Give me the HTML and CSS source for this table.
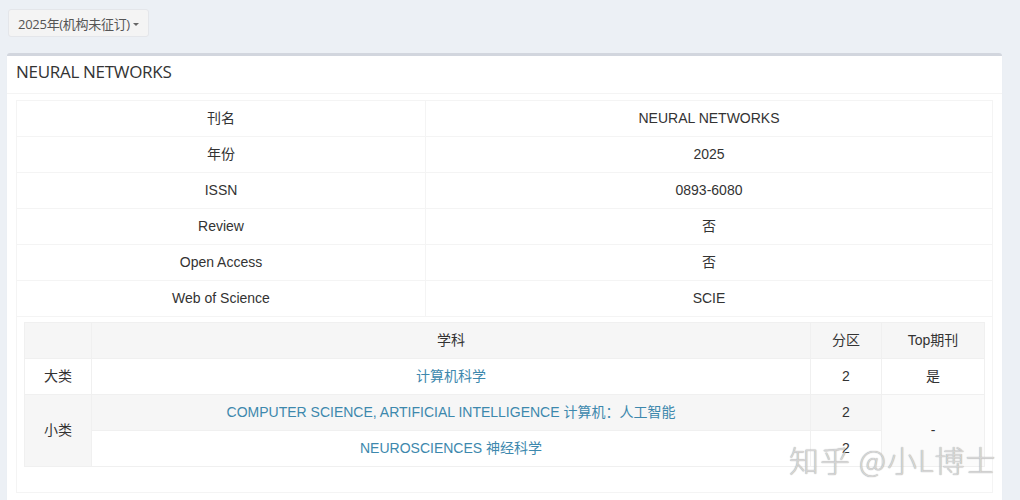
FILE: index.html
```html
<!DOCTYPE html>
<html lang="zh">
<head>
<meta charset="utf-8">
<title>NEURAL NETWORKS</title>
<link rel="stylesheet" href="styles.css">
</head>
<body>
<div class="page">
  <div class="toolbar">
    <button class="year-btn">2025年(机构未征订) <span class="caret"></span></button>
  </div>
  <div class="box">
    <div class="box-header"><h3>NEURAL NETWORKS</h3></div>
    <div class="box-body">
      <table class="info">
        <colgroup><col class="c-label"><col></colgroup>
        <tr><td>刊名</td><td>NEURAL NETWORKS</td></tr>
        <tr><td>年份</td><td>2025</td></tr>
        <tr><td>ISSN</td><td>0893-6080</td></tr>
        <tr><td>Review</td><td>否</td></tr>
        <tr><td>Open Access</td><td>否</td></tr>
        <tr><td>Web of Science</td><td>SCIE</td></tr>
        <tr><td colspan="2" class="nest">
          <table class="subjects">
            <colgroup><col class="s1"><col class="s2"><col class="s3"><col class="s4"></colgroup>
            <tr class="odd"><td></td><td>学科</td><td>分区</td><td>Top期刊</td></tr>
            <tr><td>大类</td><td><a href="#">计算机科学</a></td><td>2</td><td>是</td></tr>
            <tr class="odd"><td rowspan="2">小类</td><td><a href="#">COMPUTER SCIENCE, ARTIFICIAL INTELLIGENCE 计算机：人工智能</a></td><td>2</td><td rowspan="2" class="plain">-</td></tr>
            <tr><td><a href="#">NEUROSCIENCES 神经科学</a></td><td>2</td></tr>
          </table>
        </td></tr>
      </table>
    </div>
  </div>
</div>
<div class="watermark">知乎 @小L博士</div>
</body>
</html>
```

FILE: styles.css
```css
html, body {
  margin: 0;
  padding: 0;
  background: #ecf0f5;
  height: 100%;
  overflow: hidden;
}
body {
  font-family: "Liberation Sans", Arial, "Noto Sans CJK SC", sans-serif;
  color: #333;
  font-size: 14px;
}
.page {
  padding: 9px 18px 0 7px;
}
.toolbar {
  padding-left: 1px;
  height: 44px;
}
.year-btn {
  font-family: "Open Sans", "Noto Sans CJK SC", sans-serif;
  font-size: 13px;
  color: #555;
  background: #f4f4f4;
  border: 1px solid #e4e6ea;
  border-radius: 3px;
  height: 28px;
  width: 141px;
  padding: 0 4px;
  display: flex;
  align-items: center;
  justify-content: center;
  gap: 3px;
  letter-spacing: -0.3px;
}
.caret {
  display: inline-block;
  width: 0;
  height: 0;
  border-left: 3px solid transparent;
  border-right: 3px solid transparent;
  border-top: 3px solid #666;
  margin-top: 2px;
}
.box {
  background: #fff;
  border-top: 3px solid #d2d6de;
  border-radius: 3px;
  box-shadow: 0 1px 1px rgba(0,0,0,0.06);
  height: 460px;
}
.box-header {
  padding: 0 9px 7px 9px;
  height: 30px;
  display: flex;
  align-items: center;
  border-bottom: 1px solid #f4f4f4;
}
.box-header h3 {
  margin: 0;
  font-family: "Open Sans", "Noto Sans", sans-serif;
  font-weight: 400;
  font-size: 17px;
  color: #333;
  letter-spacing: -0.3px;
}
.box-body {
  padding: 6px 9px 0 9px;
}
table {
  border-collapse: collapse;
  width: 100%;
  table-layout: fixed;
}
.info {
  border: 1px solid #f4f4f4;
}
.c-label { width: 409px; }
.info > tbody > tr > td {
  border: 1px solid #f4f4f4;
  text-align: center;
  padding: 8px;
  line-height: 19px;
  height: 19px;
}
.info > tbody > tr > td.nest {
  padding: 5px 7px 25px 7px;
  text-align: left;
}
.subjects .s1 { width: 67px; }
.subjects .s3 { width: 71px; }
.subjects .s4 { width: 103px; }
.subjects td {
  border: 1px solid #f0f0f0;
  text-align: center;
  padding: 8px;
  line-height: 19px;
  height: 19px;
  background: #fff;
}
.subjects tr.odd td {
  background: #f6f6f6;
}
.subjects tr.odd td.plain {
  background: #fbfbfb;
}
.subjects a {
  color: #3d88ad;
  text-decoration: none;
}
.watermark {
  position: absolute;
  left: 789px;
  top: 437px;
  font-family: "Noto Sans CJK SC", sans-serif;
  font-weight: 300;
  font-size: 30px;
  color: rgba(225, 225, 225, 0.85);
  text-shadow: 0 0 1px #8a8a8a;
  letter-spacing: 1px;
  white-space: nowrap;
}
```
